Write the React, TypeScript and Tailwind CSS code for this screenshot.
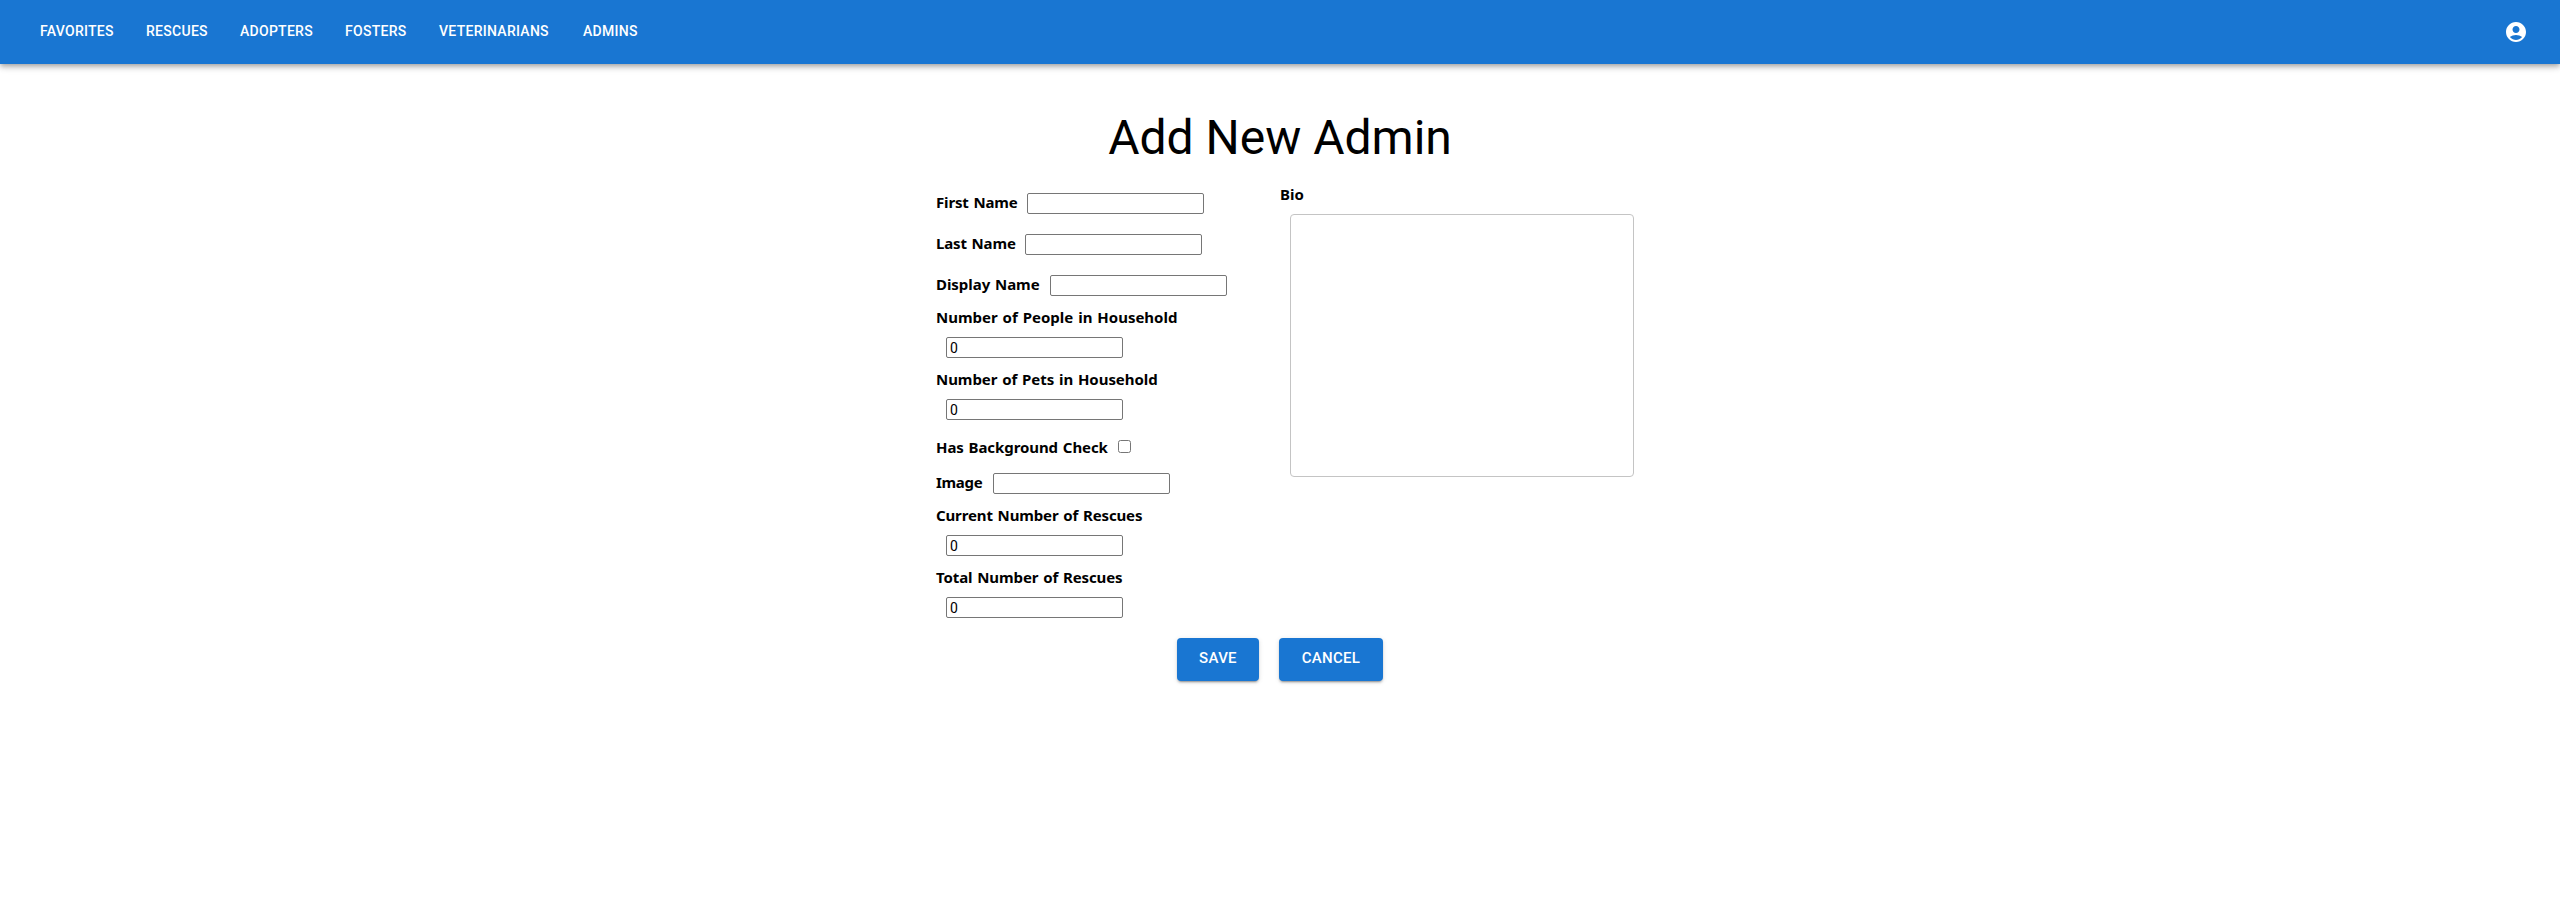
import React from 'react';

const navItems = [
  { label: 'FAVORITES', style: 'w-[106px]' },
  { label: 'RESCUES', style: 'w-[94px]' },
  { label: 'ADOPTERS', style: 'w-[105px]' },
  { label: 'FOSTERS', style: 'w-[94px]' },
  { label: 'VETERINARIANS', style: 'w-[144px]' },
  { label: 'ADMINS', style: 'w-[80px]' },
];

const inputStyle =
  'block h-[21px] w-[177px] shrink-0 rounded-[2px] border border-[#767676] bg-white px-[3px] font-[Roboto,sans-serif] text-[14px] leading-none text-black outline-none';

const labelStyle =
  "block h-[21px] shrink-0 whitespace-nowrap font-['Noto_Sans',sans-serif] text-[15px] font-bold leading-[22px] text-black [word-spacing:1px]";

function InlineField({ label, width }: { label: string; width: string }) {
  return (
    <div className="flex h-[41px] items-center gap-2.5">
      <label className={`${labelStyle} mb-1 ${width}`}>{label}</label>
      <input type="text" className={inputStyle} />
    </div>
  );
}

function NumberField({ label, tracking }: { label: string; tracking: string }) {
  return (
    <div className="h-[62px]">
      <label className={`${labelStyle} ${tracking}`}>{label}</label>
      <input type="text" inputMode="numeric" defaultValue="0" className={`${inputStyle} mt-2.5 ml-2.5`} />
    </div>
  );
}

const buttonStyle =
  'h-[43px] rounded bg-[#1976d2] pb-0.5 font-[Roboto,sans-serif] text-[15px] font-medium tracking-[0.3px] text-white shadow-[0px_3px_1px_-2px_rgba(0,0,0,0.2),0px_2px_2px_0px_rgba(0,0,0,0.14),0px_1px_5px_0px_rgba(0,0,0,0.12)]';

export default function App() {
  return (
    <div className="h-[910px] w-full overflow-hidden bg-white font-[Roboto,sans-serif]">
      <header className="flex h-16 items-center bg-[#1976d2] pr-[32px] pl-10 text-white shadow-[0px_2px_4px_-1px_rgba(0,0,0,0.2),0px_4px_5px_0px_rgba(0,0,0,0.14),0px_1px_10px_0px_rgba(0,0,0,0.12)]">
        <nav className="flex pb-0.5 text-sm font-medium tracking-[0.28px]">
          {navItems.map((item) => (
            <a key={item.label} href="#" className={item.style}>
              {item.label}
            </a>
          ))}
        </nav>
        <svg viewBox="0 0 24 24" className="ml-auto h-6 w-6" fill="currentColor">
          <path d="M12 2C6.48 2 2 6.48 2 12s4.48 10 10 10 10-4.48 10-10S17.52 2 12 2zm0 4c1.93 0 3.5 1.57 3.5 3.5S13.93 13 12 13s-3.5-1.57-3.5-3.5S10.07 6 12 6zm0 14c-2.03 0-4.43-.82-6.14-2.88C7.55 15.8 9.68 15 12 15s4.45.8 6.14 2.12C16.43 19.18 14.03 20 12 20z" />
        </svg>
      </header>
      <main className="flex flex-col items-center">
        <h1 className="mt-[46px] h-[73px] text-[48px] leading-[56px] font-normal text-black">Add New Admin</h1>
        <form className="grid w-[688px] grid-cols-[344px_344px]">
          <div>
            <InlineField label="First Name" width="w-[81px] tracking-[-0.15px]" />
            <InlineField label="Last Name" width="w-[79px] tracking-[-0.15px]" />
            <InlineField label="Display Name" width="w-[104px] tracking-[-0.05px]" />
            <NumberField label="Number of People in Household" tracking="tracking-[0px]" />
            <NumberField label="Number of Pets in Household" tracking="tracking-[-0.06px]" />
            <div className="flex h-[33px] items-start gap-2.5">
              <label className={`${labelStyle} mt-1.5 w-[172px] tracking-[-0.08px]`}>Has Background Check</label>
              <input
                type="checkbox"
                className="mt-2.5 h-[13px] w-[13px] appearance-none rounded-[2.5px] border border-[#767676] bg-white"
              />
            </div>
            <InlineField label="Image" width="w-[47px] tracking-[-0.3px]" />
            <NumberField label="Current Number of Rescues" tracking="tracking-[-0.13px]" />
            <NumberField label="Total Number of Rescues" tracking="tracking-[-0.1px]" />
          </div>
          <div>
            <label className={labelStyle}>Bio</label>
            <textarea className="mt-2.5 ml-2.5 block h-[263px] w-[344px] resize-none rounded border border-[#c4c4c4] bg-white outline-none" />
          </div>
        </form>
        <div className="mt-2.5 flex gap-5">
          <button className={`${buttonStyle} w-[82px]`}>SAVE</button>
          <button className={`${buttonStyle} w-[104px]`}>CANCEL</button>
        </div>
      </main>
    </div>
  );
}
